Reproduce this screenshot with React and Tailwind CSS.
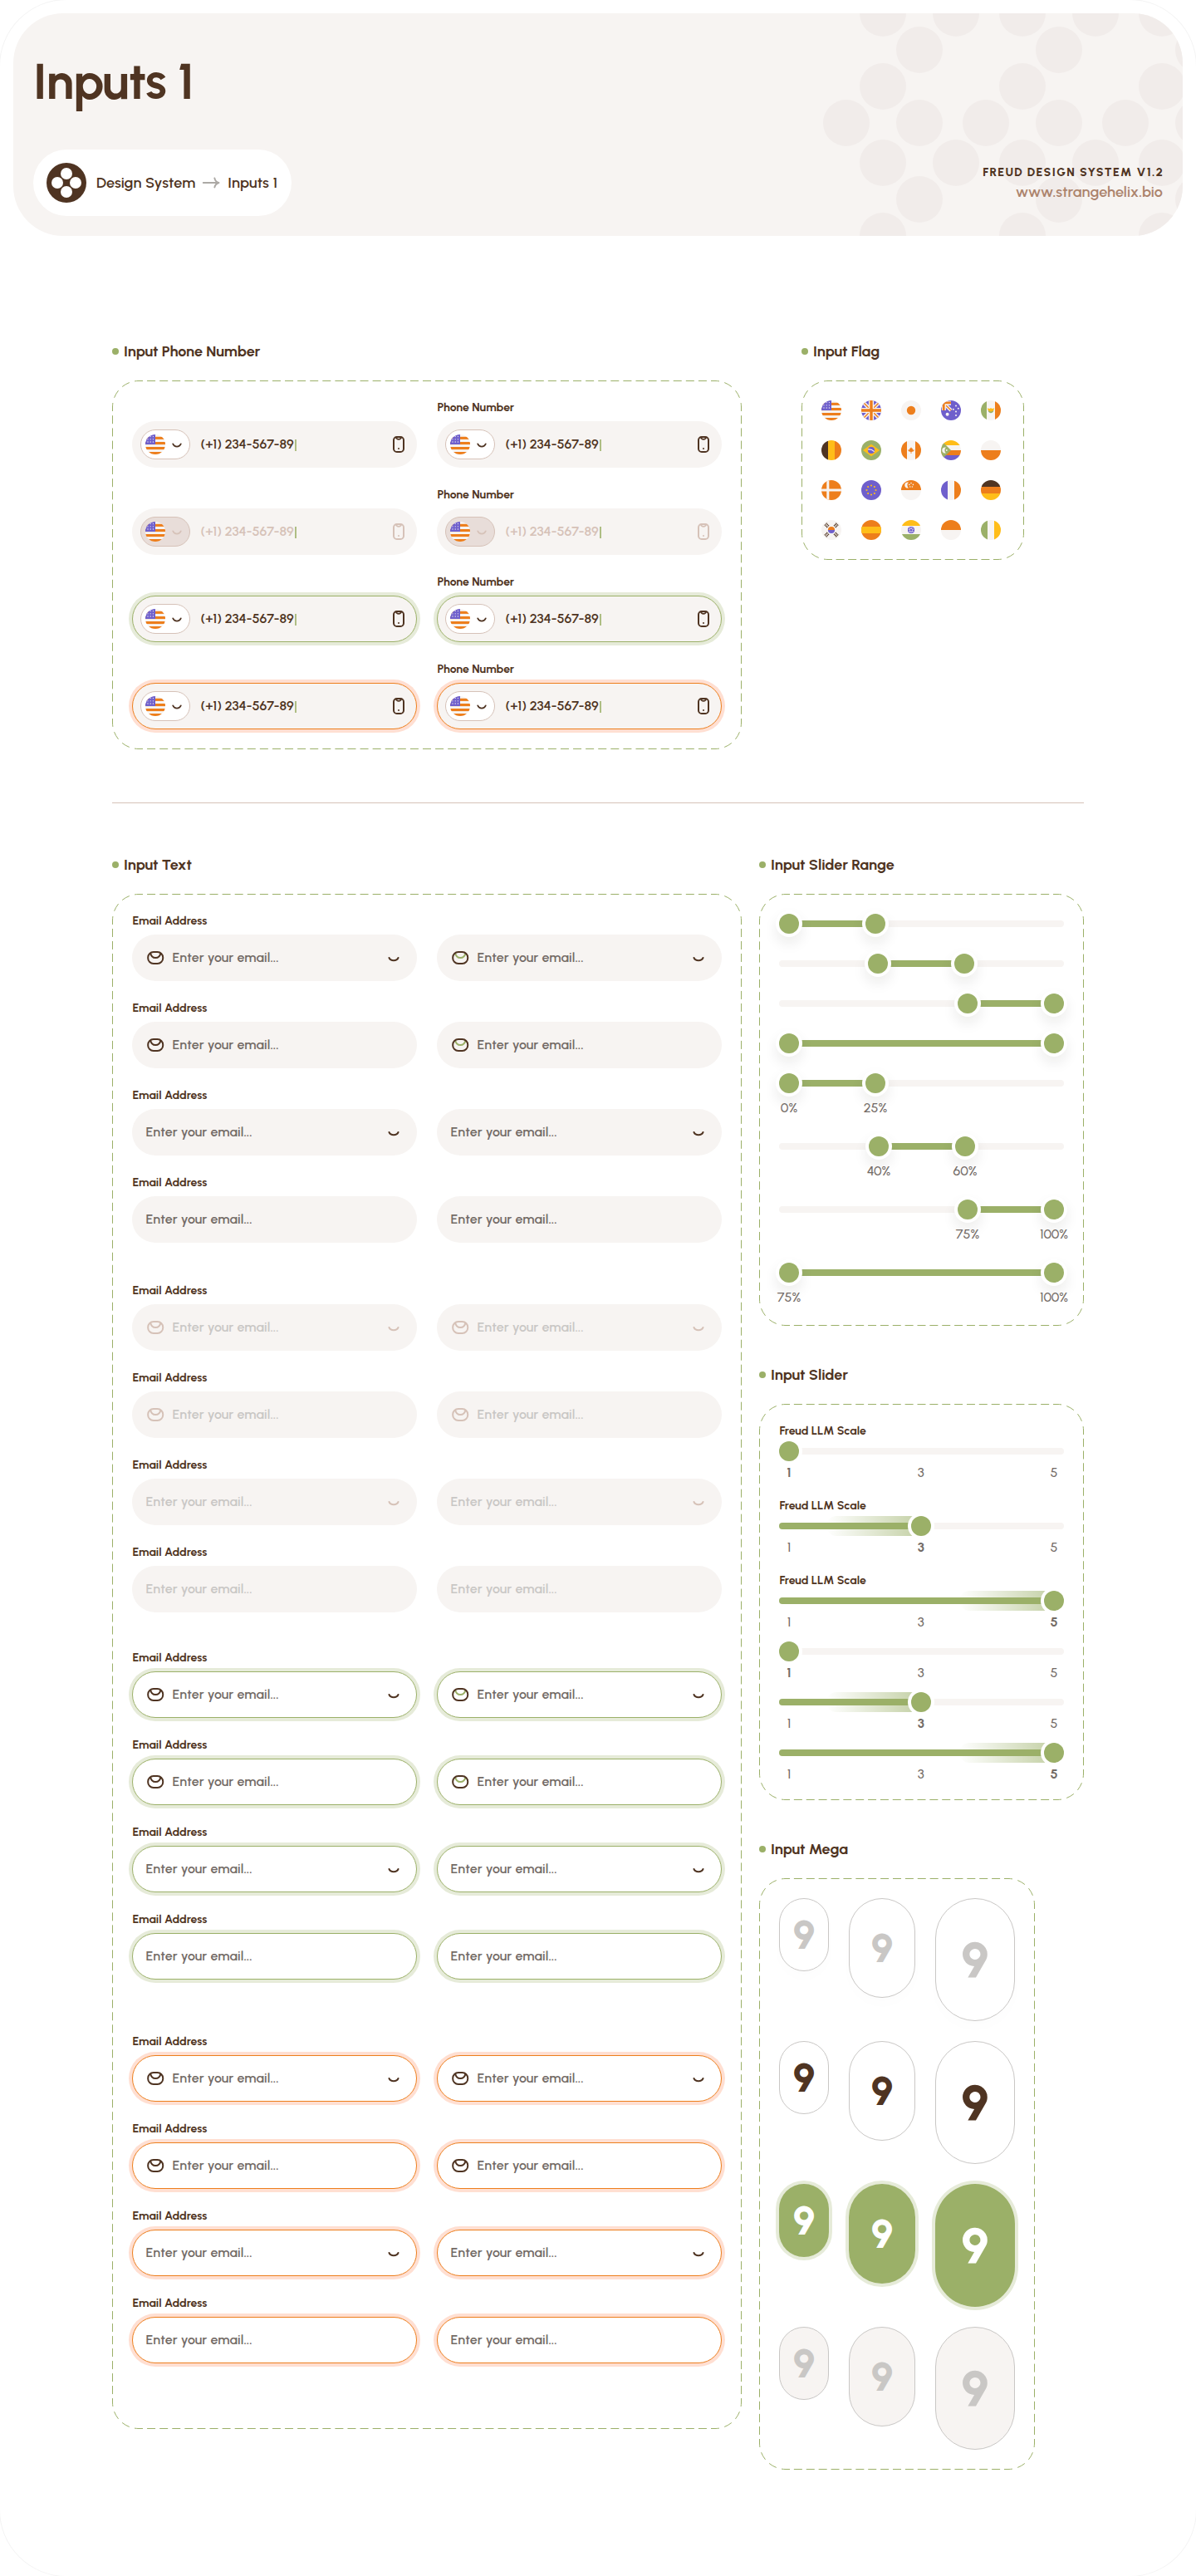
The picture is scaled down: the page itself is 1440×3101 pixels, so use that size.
import React from "react";

const BROWN = "#4F3422";
const GREEN = "#9BB068";
const ORANGE = "#ED7E1C";
const PURPLE = "#6F5FCC";
const YELLOW = "#FFBD19";
const CREAM = "#F7F4F2";

/* ---------- frame helpers ---------- */

function DashedFrame({ w, h }) {
  const r = 32;
  const edge = (len) => {
    const n = Math.round(len / 15);
    return `10 ${(len / n - 10).toFixed(3)}`;
  };
  const arc = (Math.PI * (r - 0.5)) / 2;
  const arcDash = `10 ${(arc / 3 - 10).toFixed(3)}`;
  const x2 = w - 0.5;
  const y2 = h - 0.5;
  const a = r - 0.5;
  const hd = edge(w - 2 * r);
  const vd = edge(h - 2 * r);
  return (
    <svg className="pointer-events-none absolute inset-0" width={w} height={h} fill="none" stroke={GREEN} strokeWidth="1" strokeDashoffset="5" aria-hidden="true">
      <path d={`M${r} 0.5H${w - r}`} strokeDasharray={hd} />
      <path d={`M${r} ${y2}H${w - r}`} strokeDasharray={hd} />
      <path d={`M0.5 ${r}V${h - r}`} strokeDasharray={vd} />
      <path d={`M${x2} ${r}V${h - r}`} strokeDasharray={vd} />
      <path d={`M0.5 ${r}A${a} ${a} 0 0 1 ${r} 0.5`} strokeDasharray={arcDash} />
      <path d={`M${w - r} 0.5A${a} ${a} 0 0 1 ${x2} ${r}`} strokeDasharray={arcDash} />
      <path d={`M${x2} ${h - r}A${a} ${a} 0 0 1 ${w - r} ${y2}`} strokeDasharray={arcDash} />
      <path d={`M${r} ${y2}A${a} ${a} 0 0 1 0.5 ${h - r}`} strokeDasharray={arcDash} />
    </svg>
  );
}

function Section({ title, w, h, size, children }) {
  return (
    <section className="flex flex-col gap-6">
      <h2 className="flex h-[22px] items-center gap-[6px] text-[18px] leading-[22px] font-bold tracking-[-0.06px]">
        <span className="size-2 rounded-full bg-[#9BB068]" />
        {title}
      </h2>
      <div className={`relative p-6 ${size}`}>
        <DashedFrame w={w} h={h} />
        {children}
      </div>
    </section>
  );
}

/* ---------- icons ---------- */

function Logo() {
  return (
    <svg width="48" height="48" viewBox="0 0 48 48" aria-hidden="true">
      <circle cx="24" cy="24" r="24" fill={BROWN} />
      <g fill="#fff">
        <circle cx="24" cy="13" r="7" />
        <circle cx="24" cy="35" r="7" />
        <circle cx="13" cy="24" r="7" />
        <circle cx="35" cy="24" r="7" />
      </g>
    </svg>
  );
}

function ArrowRight() {
  return (
    <svg width="24" height="24" viewBox="0 0 24 24" fill="none" stroke="#ACA9A5" strokeWidth="2" strokeLinecap="round" strokeLinejoin="round" aria-hidden="true">
      <path d="M2.8 12H21M16.4 6.6C17 9.4 18.8 11.2 21.4 12C18.8 12.8 17 14.6 16.4 17.4" />
    </svg>
  );
}

function Smile({ size = 24, color }) {
  return (
    <svg width={size} height={size} viewBox={size === 24 ? "0 0 24 24" : "4 4 16 16"} fill="none" stroke={color} strokeWidth={size === 24 ? 2 : 1.7} strokeLinecap="round" aria-hidden="true">
      {size === 24 ? <path d="M6.5 12C8.4 16.3 15.6 16.3 17.5 12" /> : <path d="M7.2 11.4C9 15.6 15 15.6 16.8 11.4" />}
    </svg>
  );
}

function Mail({ color, accent }) {
  return (
    <svg width="24" height="24" viewBox="0 0 24 24" fill="none" strokeWidth="2" aria-hidden="true">
      <path d="M6 6C7 11 9 12.1 12.3 12.1S17.6 11 18.6 6" stroke={accent} />
      <rect x="3.2" y="5" width="18" height="14" rx="6.6" stroke={color} />
    </svg>
  );
}

function PhoneIcon({ color }) {
  return (
    <svg width="24" height="24" viewBox="0 0 24 24" fill="none" stroke={color} strokeWidth="2" aria-hidden="true">
      <rect x="6" y="3" width="12" height="18" rx="3.8" />
      <path d="M8.8 3.4C9.6 6.6 14.4 6.6 15.2 3.4" strokeWidth="1.8" />
      <circle cx="12" cy="17" r="1" fill={color} stroke="none" />
    </svg>
  );
}

/* ---------- flags ---------- */

const band = (fill, x, y, w, h) => <rect key={`${fill}${x}${y}`} x={x} y={y} width={w} height={h} fill={fill} />;

const FLAGS = {
  us: (
    <>
      {band(CREAM, 0, 0, 24, 24)}
      {[2.8, 9, 15, 21].map((y) => band(ORANGE, 0, y, 24, 3.1))}
      {band(PURPLE, 0, 0, 12, 12)}
      {[2.6, 5.8, 9].flatMap((y) => [3, 6.2, 9.4].map((x) => <circle key={`${x}-${y}`} cx={x} cy={y} r="0.65" fill={CREAM} />))}
    </>
  ),
  uk: (
    <>
      {band(PURPLE, 0, 0, 24, 24)}
      <path d="M2 2L22 22M22 2L2 22" stroke={CREAM} strokeWidth="4.4" />
      <path d="M2 2L22 22M22 2L2 22" stroke={ORANGE} strokeWidth="1.5" />
      <path d="M12 0V24M0 12H24" stroke={CREAM} strokeWidth="6.2" />
      <path d="M12 0V24M0 12H24" stroke={ORANGE} strokeWidth="3.4" />
    </>
  ),
  jp: (
    <>
      {band(CREAM, 0, 0, 24, 24)}
      <circle cx="12" cy="12" r="5.2" fill={ORANGE} />
    </>
  ),
  au: (
    <>
      {band(PURPLE, 0, 0, 24, 24)}
      <path d="M4.6 4.6L12 12" stroke={CREAM} strokeWidth="4" />
      <path d="M5 5L12 12" stroke={ORANGE} strokeWidth="1.4" />
      <path d="M3.4 12V3.2H12" stroke={CREAM} strokeWidth="5" fill="none" />
      <path d="M3.2 12V2.9H12" stroke={ORANGE} strokeWidth="2.8" fill="none" />
      <circle cx="7.6" cy="16.8" r="2" fill={CREAM} />
      {[[14.8, 10.8], [18, 6.4], [20.8, 9.8], [18, 13.6], [18, 18]].map(([x, y]) => <circle key={`${x}${y}`} cx={x} cy={y} r="1" fill={CREAM} />)}
    </>
  ),
  mx: (
    <>
      {band(CREAM, 0, 0, 24, 24)}
      {band(GREEN, 0, 0, 7, 24)}
      {band(ORANGE, 17, 0, 7, 24)}
      <path d="M8.6 12C9 16.2 15 16.2 15.4 12Z" fill={GREEN} />
      <path d="M7.8 9.6L11 10L12 8.8L13 10L16.2 9.6C15.8 11.6 14.4 13.4 12 13.6C9.6 13.4 8.2 11.6 7.8 9.6Z" fill={YELLOW} />
    </>
  ),
  be: (
    <>
      {band(BROWN, 0, 0, 8, 24)}
      {band(YELLOW, 8, 0, 8, 24)}
      {band(ORANGE, 16, 0, 8, 24)}
    </>
  ),
  br: (
    <>
      {band(GREEN, 0, 0, 24, 24)}
      <path d="M12 4.8L22 12L12 19.2L2 12Z" fill={YELLOW} />
      <circle cx="12" cy="12" r="4.1" fill={PURPLE} />
      <path d="M8.2 11C11 10.8 13.8 11.8 15.6 13.6" stroke={CREAM} strokeWidth="1.3" fill="none" />
    </>
  ),
  ca: (
    <>
      {band(CREAM, 0, 0, 24, 24)}
      {band(ORANGE, 0, 0, 7, 24)}
      {band(ORANGE, 17, 0, 7, 24)}
      <path d="M12 8.2L13.1 10L14 9.7L13.8 11.6L16 11.4L14.9 13.2L12.4 14V16H11.6V14L9.1 13.2L8 11.4L10.2 11.6L10 9.7L10.9 10Z" fill={ORANGE} />
    </>
  ),
  km: (
    <>
      {band(YELLOW, 0, 0, 24, 6)}
      {band(CREAM, 0, 6, 24, 6)}
      {band(ORANGE, 0, 12, 24, 6)}
      {band(PURPLE, 0, 18, 24, 6)}
      <path d="M0 0L12 12L0 24Z" fill={GREEN} />
      <path d="M6 8.6A3.6 3.6 0 1 0 6 15.4A4.4 4.4 0 0 1 6 8.6Z" fill={CREAM} />
      <circle cx="6.8" cy="12" r="0.9" fill={CREAM} />
    </>
  ),
  pl: (
    <>
      {band(CREAM, 0, 0, 24, 12)}
      {band(ORANGE, 0, 12, 24, 12)}
    </>
  ),
  dk: (
    <>
      {band(ORANGE, 0, 0, 24, 24)}
      <path d="M7.8 0V24M0 12H24" stroke={CREAM} strokeWidth="3" />
    </>
  ),
  eu: (
    <>
      {band(PURPLE, 0, 0, 24, 24)}
      {[0, 45, 90, 135, 180, 225, 270, 315].map((a) => <circle key={a} cx="12" cy="6.5" r="1.05" fill={YELLOW} transform={`rotate(${a} 12 12)`} />)}
    </>
  ),
  sg: (
    <>
      {band(CREAM, 0, 12, 24, 12)}
      {band(ORANGE, 0, 0, 24, 12)}
      <path d="M9 2.6A3.6 3.6 0 1 0 9 9.4A4.4 4.4 0 0 1 9 2.6Z" fill={CREAM} />
      {[[12, 3.6], [14.4, 5.4], [9.8, 5.4], [10.8, 8], [13.4, 8]].map(([x, y]) => <circle key={`${x}${y}`} cx={x} cy={y} r="0.8" fill={CREAM} />)}
    </>
  ),
  fr: (
    <>
      {band(PURPLE, 0, 0, 8, 24)}
      {band(CREAM, 8, 0, 8, 24)}
      {band(ORANGE, 16, 0, 8, 24)}
    </>
  ),
  de: (
    <>
      {band(BROWN, 0, 0, 24, 8)}
      {band(ORANGE, 0, 8, 24, 8)}
      {band(YELLOW, 0, 16, 24, 8)}
    </>
  ),
  kr: (
    <>
      {band(CREAM, 0, 0, 24, 24)}
      <path d="M7.9 12A4.1 4.1 0 0 1 16.1 12Z" fill={ORANGE} />
      <path d="M7.9 12A4.1 4.1 0 0 0 16.1 12Z" fill={PURPLE} />
      {[[6.4, 6.4, -45], [17.6, 6.4, 45], [6.4, 17.6, 45], [17.6, 17.6, -45]].map(([x, y, a]) => (
        <g key={`${x}${y}`} transform={`rotate(${a} ${x} ${y})`} stroke={BROWN} strokeWidth="1.1" strokeDasharray="1.9 0.5">
          <path d={`M${x - 2.1} ${y - 1.7}H${x + 2.1}M${x - 2.1} ${y}H${x + 2.1}M${x - 2.1} ${y + 1.7}H${x + 2.1}`} />
        </g>
      ))}
    </>
  ),
  es: (
    <>
      {band(ORANGE, 0, 0, 24, 24)}
      {band(YELLOW, 0, 8, 24, 8)}
    </>
  ),
  in: (
    <>
      {band(CREAM, 0, 0, 24, 24)}
      {band(YELLOW, 0, 0, 24, 7)}
      {band(GREEN, 0, 17, 24, 7)}
      <circle cx="12" cy="12" r="3.5" fill="none" stroke={PURPLE} strokeWidth="1.2" />
      <circle cx="12" cy="12" r="1.6" fill={PURPLE} />
      <circle cx="12" cy="12" r="2.4" fill="none" stroke={PURPLE} strokeWidth="1.4" strokeDasharray="1 0.9" />
    </>
  ),
  id: (
    <>
      {band(ORANGE, 0, 0, 24, 12)}
      {band(CREAM, 0, 12, 24, 12)}
    </>
  ),
  ie: (
    <>
      {band(GREEN, 0, 0, 8, 24)}
      {band(CREAM, 8, 0, 8, 24)}
      {band(YELLOW, 16, 0, 8, 24)}
    </>
  ),
};

function Flag({ code }) {
  return (
    <svg className="shrink-0 rounded-full" width="24" height="24" viewBox="0 0 24 24" role="img" aria-label={code}>
      {FLAGS[code]}
    </svg>
  );
}

/* ---------- inputs ---------- */

const SHELL = {
  default: "bg-[#F7F4F2]",
  disabled: "bg-[#F7F4F2]",
  focus: "border border-[#9BB068] shadow-[0_0_0_4px_#E6EBD9]",
  error: "border border-[#ED7E1C] shadow-[0_0_0_4px_#FFDFD2]",
};

function Label({ children }) {
  return <div className="h-[17px] pl-[0.4px] text-[14px] leading-[17px] font-bold">{children}</div>;
}

function PhoneField({ state }) {
  const off = state === "disabled";
  const ink = off ? "#D6C2B8" : BROWN;
  const bordered = state === "focus" || state === "error";
  return (
    <div className={`flex h-14 w-[343px] items-center rounded-full bg-[#F7F4F2] ${bordered ? "px-[9px]" : "px-[10px]"} ${SHELL[state]}`}>
      <div className={`flex h-9 w-[60px] items-center gap-[5.5px] rounded-full border border-[#D6C2B8] pl-[5px] ${off ? "bg-[#E8DDD9]" : "bg-white"}`}>
        <Flag code="us" />
        <Smile size={16} color={ink} />
      </div>
      <span className={`ml-[12.5px] text-[16px] leading-5 font-semibold tracking-[-0.08px] ${off ? "text-[#D6C2B8]" : ""}`}>(+1) 234-567-89</span>
      <span className="mt-[2px] ml-[1px] h-[14px] w-[2px] bg-[#9BB068]/80" />
      <span className="ml-auto">
        <PhoneIcon color={ink} />
      </span>
    </div>
  );
}

function EmailField({ state, icon, chevron, tinted }) {
  const off = state === "disabled";
  const ink = off ? "#D6C2B8" : BROWN;
  const bordered = state === "focus" || state === "error";
  return (
    <div className={`flex h-14 w-[343px] items-center gap-2 rounded-full ${bordered ? "bg-white px-[15px]" : "px-4"} ${SHELL[state]}`}>
      {icon && <Mail color={ink} accent={tinted ? GREEN : ink} />}
      <span className={`pl-[0.5px] text-[16px] leading-5 font-semibold tracking-[0.1px] ${off ? "text-[#C9C7C5]" : "text-[#736B66]"}`}>Enter your email...</span>
      {chevron && (
        <span className="ml-auto">
          <Smile color={ink} />
        </span>
      )}
    </div>
  );
}

const VARIANTS = [
  { icon: true, chevron: true },
  { icon: true, chevron: false },
  { icon: false, chevron: true },
  { icon: false, chevron: false },
];

function EmailGroup({ state, className = "" }) {
  return (
    <div className={`flex flex-col gap-6 ${className}`}>
      {VARIANTS.map((v, i) => (
        <div key={i} className="flex items-end gap-6">
          <div className="flex flex-col gap-2">
            <Label>Email Address</Label>
            <EmailField state={state} {...v} />
          </div>
          <EmailField state={state} {...v} tinted={state === "default" || state === "focus"} />
        </div>
      ))}
    </div>
  );
}

/* ---------- sliders ---------- */

function RangeSlider({ from, to, labels }) {
  return (
    <div className="flex flex-col gap-2">
      <div className="relative flex h-6 items-center">
        <div className="h-2 w-full rounded-full bg-[#F7F4F2]" />
        <div className="absolute top-2 h-2 bg-[#9BB068]" style={{ left: from, width: to - from }} />
        {[from, to].map((c) => (
          <div key={c} className="absolute top-0 size-6 rounded-full bg-[#9BB068] shadow-[0_0_0_4px_#fff,0_8px_16px_4px_rgba(31,22,15,0.08)]" style={{ left: c - 12 }} />
        ))}
      </div>
      {labels && (
        <div className="relative h-5 text-[16px] leading-5 font-medium text-[#736B66]">
          {[from, to].map((c, i) => (
            <span key={c} className="absolute top-0 w-12 text-center" style={{ left: c - 24 }}>
              {labels[i]}
            </span>
          ))}
        </div>
      )}
    </div>
  );
}

function ScaleSlider({ value, label }) {
  const center = { 1: 12, 3: 171, 5: 331 }[value];
  return (
    <div className="flex flex-col gap-1">
      {label && <Label>Freud LLM Scale</Label>}
      <div className="relative flex h-6 items-center">
        <div className="h-2 w-full rounded-full bg-[#F7F4F2]" />
        {value > 1 && (
          <>
            <div className="absolute top-0 h-6 w-[114px] rounded-l-full bg-linear-to-r from-[#9BB068]/0 to-[#9BB068]/60" style={{ left: center - 114 }} />
            <div className="absolute top-2 left-0 h-2 rounded-l-full bg-[#9BB068]" style={{ width: center }} />
          </>
        )}
        <div className="absolute top-0 size-6 rounded-full bg-[#9BB068] shadow-[0_0_0_4px_#fff]" style={{ left: center - 12 }} />
      </div>
      <div className="flex h-[17px] justify-between text-[16px] leading-[19px] text-[#736B66]">
        {[1, 3, 5].map((n) => (
          <span key={n} className={`w-6 text-center ${n === 3 ? "-ml-[1.5px]" : ""} ${n === value ? "font-bold" : "font-medium"}`}>
            {n}
          </span>
        ))}
      </div>
    </div>
  );
}

/* ---------- mega digits ---------- */

const MEGA = [
  "border border-[#C9C7C5] text-[#C9C7C5] shadow-[0_8px_16px_rgba(31,22,15,0.01)]",
  "border border-[#C9C7C5] text-[#4F3422]",
  "bg-[#9BB068] text-white shadow-[0_0_0_4px_#E6EBD9]",
  "border border-[#C9C7C5] bg-[#F7F4F2] text-[#C9C7C5]",
];

const MEGA_SIZES = ["h-[88px] w-[60px] text-[48px]", "h-[120px] w-20 text-[48px]", "h-[148px] w-24 text-[60px]"];

/* ---------- header pattern ---------- */

const DOTS = [
  [1063, 16], [1151, 16], [1231, 16], [1319, 16], [1399, 16],
  [1107, 60], [1275, 60], [1443, 60],
  [1063, 104], [1231, 104], [1399, 104],
  [1019, 148], [1107, 148], [1187, 148], [1275, 148], [1355, 148], [1443, 148],
  [1063, 196], [1151, 196], [1231, 196], [1319, 196], [1399, 196],
  [1107, 240], [1275, 240], [1443, 240],
  [1063, 284], [1231, 284], [1399, 284],
];

function Header() {
  return (
    <header className="relative mx-4 flex h-[268px] flex-col justify-between overflow-hidden rounded-[60px] bg-[#F7F4F2] px-6 pt-[46px] pb-6">
      <svg className="absolute top-0 right-0" width="444" height="268" viewBox="980 16 444 268" fill="#F1ECEA" aria-hidden="true">
        {DOTS.map(([x, y]) => (
          <circle key={`${x}-${y}`} cx={x} cy={y} r="28" />
        ))}
      </svg>
      <h1 className="text-[60px] leading-[72px] font-bold tracking-[-0.8px]">Inputs 1</h1>
      <div className="relative flex items-center justify-between">
        <nav className="flex h-20 w-[311px] items-center rounded-full bg-white px-4 text-[18px] leading-[22px] font-semibold">
          <Logo />
          <span className="ml-3 tracking-[0.08px]">Design System</span>
          <span className="mr-2 ml-[7px]">
            <ArrowRight />
          </span>
          <span className="tracking-[0.15px]">Inputs 1</span>
        </nav>
        <div className="flex flex-col items-end gap-1">
          <div className="-mr-[1.4px] text-[14px] leading-[17px] font-extrabold tracking-[1.4px]">FREUD DESIGN SYSTEM V1.2</div>
          <div className="text-[18px] leading-[22px] font-semibold tracking-[0.1px] text-[#AC836C]">www.strangehelix.bio</div>
        </div>
      </div>
    </header>
  );
}

export default function App() {
  return (
    <div className="h-[3101px] w-[1440px] overflow-hidden bg-white font-[Urbanist,Lato,sans-serif] text-[#4F3422]">
      <div className="h-full rounded-[80px] pt-4 shadow-[0_0_0_1px_#F4F4F4]">
        <Header />
        <main className="flex flex-col px-[135px] pt-32">
          <div className="flex gap-[72px]">
            <Section title="Input Phone Number" w={758} h={444} size="h-[444px] w-[758px]">
              <div className="flex flex-col gap-6">
                {["default", "disabled", "focus", "error"].map((s) => (
                  <div key={s} className="flex items-end gap-6">
                    <PhoneField state={s} />
                    <div className="flex flex-col gap-2">
                      <Label>Phone Number</Label>
                      <PhoneField state={s} />
                    </div>
                  </div>
                ))}
              </div>
            </Section>
            <Section title="Input Flag" w={268} h={216} size="h-[216px] w-[268px]">
              <div className="grid w-[216px] grid-cols-5 gap-6">
                {["us", "uk", "jp", "au", "mx", "be", "br", "ca", "km", "pl", "dk", "eu", "sg", "fr", "de", "kr", "es", "in", "id", "ie"].map((c) => (
                  <Flag key={c} code={c} />
                ))}
              </div>
            </Section>
          </div>

          <div className="mt-16 mb-[63px] h-px bg-[#D6C2B8]" />

          <div className="flex items-start justify-between">
            <Section title="Input Text" w={758} h={1848} size="h-[1848px] w-[758px]">
              <EmailGroup state="default" />
              <EmailGroup state="disabled" className="mt-[49px]" />
              <EmailGroup state="focus" className="mt-[46px]" />
              <EmailGroup state="error" className="mt-[66px]" />
            </Section>

            <div className="flex flex-col gap-12">
              <Section title="Input Slider Range" w={391} h={520} size="h-[520px] w-[391px]">
                <div className="flex flex-col gap-6">
                  <RangeSlider from={12} to={116} />
                  <RangeSlider from={119} to={223} />
                  <RangeSlider from={227} to={331} />
                  <RangeSlider from={12} to={331} />
                  <RangeSlider from={12} to={116} labels={["0%", "25%"]} />
                  <RangeSlider from={120} to={224} labels={["40%", "60%"]} />
                  <RangeSlider from={227} to={331} labels={["75%", "100%"]} />
                  <RangeSlider from={12} to={331} labels={["75%", "100%"]} />
                </div>
              </Section>

              <Section title="Input Slider" w={391} h={477} size="h-[477px] w-[391px]">
                <div className="flex flex-col gap-4">
                  <div className="flex flex-col gap-6">
                    {[1, 3, 5].map((v) => (
                      <ScaleSlider key={v} value={v} label />
                    ))}
                  </div>
                  {[1, 3, 5].map((v) => (
                    <ScaleSlider key={v} value={v} />
                  ))}
                </div>
              </Section>

              <Section title="Input Mega" w={332} h={712} size="h-[712px] w-[332px]">
                <div className="flex flex-col gap-6">
                  {MEGA.map((tone) => (
                    <div key={tone} className="flex h-[148px] items-start gap-6">
                      {MEGA_SIZES.map((size) => (
                        <div key={size} className={`flex items-center justify-center rounded-full leading-none font-extrabold ${size} ${tone}`}>
                          9
                        </div>
                      ))}
                    </div>
                  ))}
                </div>
              </Section>
            </div>
          </div>
        </main>
      </div>
    </div>
  );
}
